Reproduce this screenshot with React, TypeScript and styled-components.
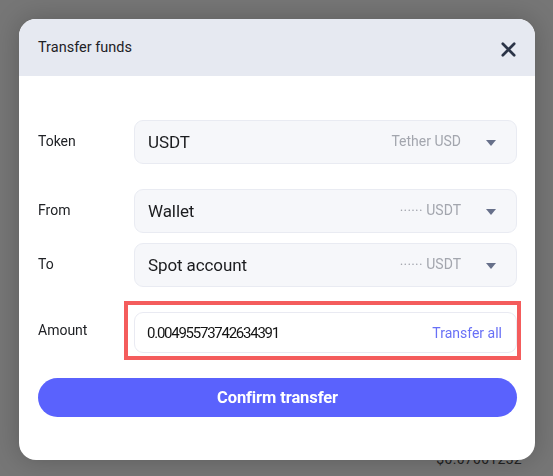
import React, { useState } from 'react';
import styled, { createGlobalStyle } from 'styled-components';

const GlobalStyle = createGlobalStyle`
    html, body {
        margin: 0;
        padding: 0;
        width: 100%;
        height: 100%;
        overflow: hidden;
        background: #767676;
        font-family: Roboto, "Liberation Sans", Arial, sans-serif;
    }
    * {
        box-sizing: border-box;
    }
`

type Account = {
    label: string;
    value: string;
    hint: string;
    masked?: boolean;
}

const ROWS: Account[] = [
    { label: "From", value: "Wallet", hint: "USDT", masked: true },
    { label: "To", value: "Spot account", hint: "USDT", masked: true },
]

export default function App() {
    const [amount, setAmount] = useState<string>("0.00495573742634391");

    return (
        <>
            <GlobalStyle />
            {/* page content under the modal */}
            <Page>
                <BalanceText>$0.07001232</BalanceText>
            </Page>

            <Overlay>
                <Dialog>
                    <Header>
                        <Title>Transfer funds</Title>
                        <CloseButton aria-label="close">
                            <svg width="15" height="15" viewBox="0 0 15 15">
                                <path d="M1.8 1.8 L13.2 13.2 M13.2 1.8 L1.8 13.2" stroke="#2b3447" strokeWidth="2.7" strokeLinecap="round" />
                            </svg>
                        </CloseButton>
                    </Header>

                    <Body>
                        <Row>
                            <Label>Token</Label>
                            <Select>
                                <SelectValue>USDT</SelectValue>
                                <SelectHint>Tether USD</SelectHint>
                                <Caret />
                            </Select>
                        </Row>

                        <AccountGroup>
                            {ROWS.map((row) => (
                                <Row key={row.label}>
                                    <Label>{row.label}</Label>
                                    <Select>
                                        <SelectValue>{row.value}</SelectValue>
                                        <SelectHint>
                                            {row.masked && <Masked>••••••</Masked>}
                                            {row.hint}
                                        </SelectHint>
                                        <Caret />
                                    </Select>
                                </Row>
                            ))}
                        </AccountGroup>

                        <Row>
                            <Label $lift={5}>Amount</Label>
                            <Highlight>
                                <AmountBox>
                                    <AmountInput value={amount} onChange={(e) => setAmount(e.target.value)} />
                                    <TransferAll>Transfer all</TransferAll>
                                </AmountBox>
                            </Highlight>
                        </Row>

                        <ConfirmButton>Confirm transfer</ConfirmButton>
                    </Body>
                </Dialog>
            </Overlay>
        </>
    )
}

const Page = styled.div`
    height: 100vh;
    display: flex;
    align-items: flex-end;
    justify-content: flex-end;
    padding: 0 31px 9px 0;
`

const BalanceText = styled.div`
    font: normal normal 400 14px Roboto, "Liberation Sans", sans-serif;
    letter-spacing: 0.3px;
    color: #232323;
`

const Overlay = styled.div`
    position: fixed;
    inset: 0;
    display: flex;
    justify-content: center;
    align-items: flex-start;
    padding: 19px 18px 0 19px;
`

const Dialog = styled.div`
    width: 516px;
    background: #ffffff;
    border-radius: 17px;
    overflow: hidden;
    box-shadow: 0 0 26px rgba(0, 0, 0, 0.22);
`

const Header = styled.div`
    height: 57px;
    background: #e6e9f1;
    display: flex;
    align-items: center;
    justify-content: space-between;
    padding: 0 14px 0 19px;
`

const Title = styled.div`
    font: normal normal 400 14.5px Roboto, sans-serif;
    color: #1e2126;
    margin-top: 0;
`

const CloseButton = styled.button`
    border: none;
    background: transparent;
    padding: 0;
    width: 26px;
    height: 26px;
    display: flex;
    align-items: center;
    justify-content: center;
    margin-top: 4px;
    cursor: pointer;
`

const Body = styled.div`
    padding: 44px 18px 43px 19px;
    display: flex;
    flex-direction: column;
`

const Row = styled.div`
    display: grid;
    grid-template-columns: 96px 1fr;
    align-items: center;
`

const AccountGroup = styled.div`
    display: flex;
    flex-direction: column;
    gap: 10px;
    margin: 25px 0;
`

const Label = styled.div<{ $lift?: number }>`
    font: normal normal 400 14px Roboto, sans-serif;
    color: #202226;
    margin-top: ${(p) => -(p.$lift ?? 2)}px;
`

const Select = styled.div`
    height: 44px;
    display: flex;
    align-items: center;
    padding: 0 20px 0 13px;
    background: #f6f7fa;
    border: 1px solid #e9ebf2;
    border-radius: 9px;
`

const SelectValue = styled.div`
    flex: 1;
    font: normal normal 400 17px Roboto, sans-serif;
    letter-spacing: -0.1px;
    color: #1b1c1f;
`

const SelectHint = styled.div`
    display: flex;
    align-items: center;
    font: normal normal 400 14px Roboto, sans-serif;
    color: #a3a6ae;
    margin-right: 25px;
    margin-top: -2px;
`

const Masked = styled.span`
    font-size: 7.5px;
    letter-spacing: 1.3px;
    margin-right: 3px;
    margin-top: 1px;
`

const Caret = styled.span`
    width: 0;
    height: 0;
    border-left: 5.5px solid transparent;
    border-right: 5.5px solid transparent;
    border-top: 6px solid #67708a;
    margin-top: 1px;
`

const Highlight = styled.div`
    border: 4px solid #f45c5c;
    padding: 7px 0 3px 6px;
    margin: -11px -4px -7px -10px;
`

const AmountBox = styled.div`
    height: 41px;
    display: flex;
    align-items: center;
    padding: 0 14px 0 12px;
    background: #ffffff;
    border: 1px solid #e9eaf2;
    border-radius: 9px;
`

const AmountInput = styled.input`
    flex: 1;
    min-width: 0;
    border: none;
    outline: none;
    background: transparent;
    padding: 0;
    font: normal normal 400 15px Roboto, sans-serif;
    letter-spacing: -1.25px;
    color: #141414;
`

const TransferAll = styled.button`
    border: none;
    background: transparent;
    padding: 0;
    font: normal normal 400 14px Roboto, sans-serif;
    color: #6870f6;
    cursor: pointer;
`

const ConfirmButton = styled.button`
    margin-top: 25px;
    height: 39px;
    border: none;
    border-radius: 20px;
    background: #5a62fd;
    color: #ffffff;
    font: normal normal 700 16.5px Roboto, sans-serif;
    letter-spacing: -0.1px;
    cursor: pointer;
`
